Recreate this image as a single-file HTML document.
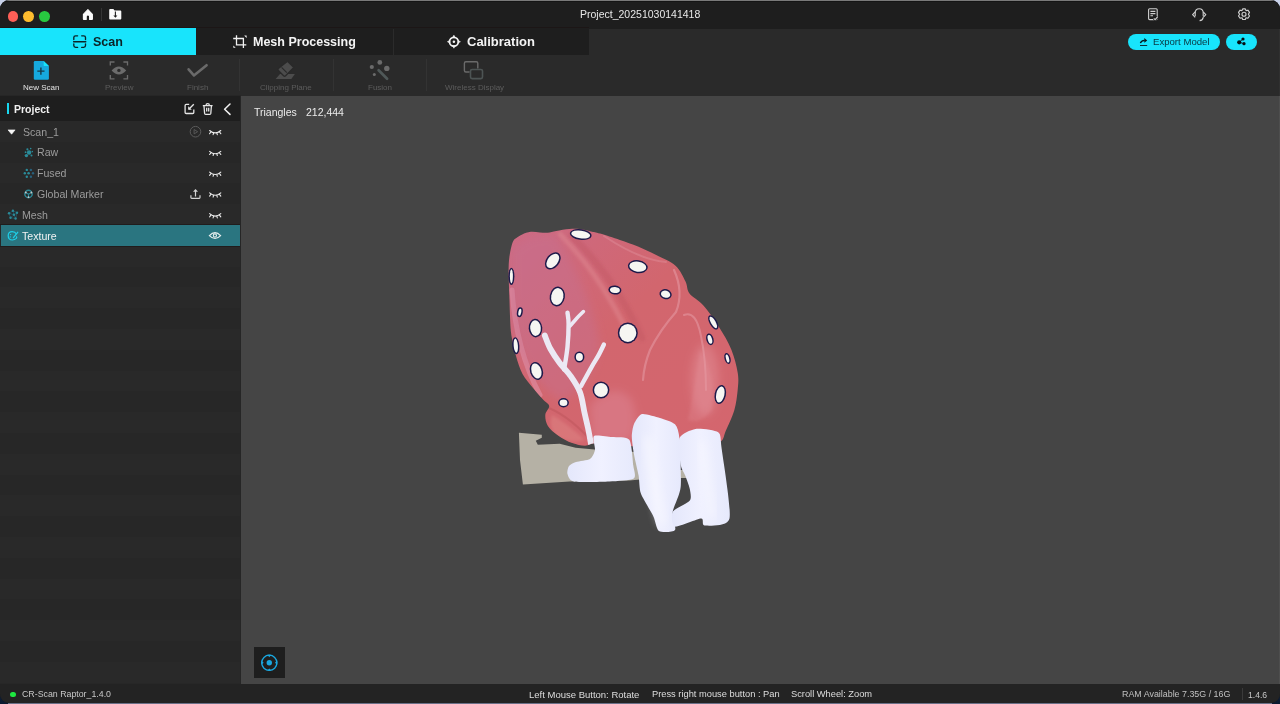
<!DOCTYPE html>
<html><head><meta charset="utf-8"><style>
*{box-sizing:border-box;margin:0;padding:0}
html,body{width:1280px;height:704px;overflow:hidden}
body{position:relative;background:linear-gradient(180deg,#c9d2ea 0%,#8a93a8 60%,#0c1a30 100%);font-family:"Liberation Sans",sans-serif}
.abs{position:absolute}
svg.abs{overflow:visible}
#win{position:absolute;left:0;top:0;width:1280px;height:703px;border-radius:9px;overflow:hidden;background:#1e1e1e}
.t{position:absolute;white-space:pre;line-height:1;will-change:transform}
</style></head><body>
<div id="win">
<div class="abs" style="left:0px;top:0px;width:1280px;height:28px;background:#1e1e1e;"></div><div class="abs" style="left:0px;top:27px;width:589px;height:1px;background:#1c1616;"></div><div class="abs" style="left:0px;top:28px;width:1280px;height:27px;background:#1e1e1e;"></div><div class="abs" style="left:0px;top:28px;width:196px;height:27px;background:#18e4fc;"></div><div class="abs" style="left:393px;top:29px;width:1px;height:26px;background:#2b2b2b;"></div><div class="abs" style="left:589px;top:29px;width:691px;height:26px;background:#2a2a2a;"></div><div class="abs" style="left:0px;top:55px;width:1280px;height:41px;background:#2a2a2a;"></div><div class="abs" style="left:0px;top:95px;width:241px;height:1px;background:#262626;"></div><div class="abs" style="left:0;top:96px;width:241px;height:588px;background:repeating-linear-gradient(180deg,#292929 0 20.8px,#272727 20.8px 41.6px);background-position:0 25px"></div><div class="abs" style="left:0px;top:96px;width:241px;height:25px;background:#1e1e1e;"></div><div class="abs" style="left:241px;top:96px;width:1039px;height:588px;background:#454545;"></div><div class="abs" style="left:1279px;top:29px;width:1px;height:67px;background:#303030;"></div><div class="abs" style="left:1279px;top:96px;width:1px;height:588px;background:#4e4e4e;"></div><div class="abs" style="left:0px;top:684px;width:1280px;height:19px;background:#232323;"></div><div class="abs" style="left:7px;top:0px;width:1266px;height:1px;background:#7a7a7a;"></div><div class="abs" style="left:5px;top:1px;width:1270px;height:1px;background:#151515;"></div><div class="abs" style="left:7.6px;top:11px;width:10.8px;height:10.8px;border-radius:50%;background:#fe5f57"></div><div class="abs" style="left:23.2px;top:11px;width:10.8px;height:10.8px;border-radius:50%;background:#febc2e"></div><div class="abs" style="left:38.9px;top:11px;width:10.8px;height:10.8px;border-radius:50%;background:#28c840"></div><div class="t" style="left:579.50px;top:9.01px;font-size:10.5px;font-weight:400;color:#e8e8e8;">Project_20251030141418</div><div class="t" style="left:93.00px;top:35.67px;font-size:12.5px;font-weight:700;color:#0b2327;">Scan</div><div class="t" style="left:253.00px;top:35.67px;font-size:12.5px;font-weight:700;color:#f4f4f4;">Mesh Processing</div><div class="t" style="left:467.00px;top:35.25px;font-size:13px;font-weight:700;color:#f4f4f4;">Calibration</div><div class="t" style="left:23.00px;top:84.13px;font-size:8px;font-weight:400;color:#e2e2e2;">New Scan</div><div class="t" style="left:105.00px;top:84.13px;font-size:8px;font-weight:400;color:#5c5c5c;">Preview</div><div class="t" style="left:187.00px;top:84.13px;font-size:8px;font-weight:400;color:#5c5c5c;">Finish</div><div class="t" style="left:260.00px;top:84.13px;font-size:8px;font-weight:400;color:#5c5c5c;">Clipping Plane</div><div class="t" style="left:368.00px;top:84.13px;font-size:8px;font-weight:400;color:#5c5c5c;">Fusion</div><div class="t" style="left:445.00px;top:84.13px;font-size:8px;font-weight:400;color:#5c5c5c;">Wireless Display</div><div class="abs" style="left:239px;top:59px;width:1px;height:32px;background:#333333;"></div><div class="abs" style="left:333px;top:59px;width:1px;height:32px;background:#333333;"></div><div class="abs" style="left:426px;top:59px;width:1px;height:32px;background:#333333;"></div><div class="abs" style="left:1128px;top:34px;width:92px;height:16px;border-radius:8px;background:#18e4fc"></div><div class="abs" style="left:1226px;top:34px;width:31px;height:16px;border-radius:8px;background:#18e4fc"></div><div class="t" style="left:1153.20px;top:36.67px;font-size:9.6px;font-weight:400;color:#0a3640;">Export Model</div><div class="abs" style="left:7px;top:103px;width:2px;height:11px;background:#18d8f0;"></div><div class="t" style="left:13.50px;top:103.81px;font-size:10.5px;font-weight:700;color:#f0f0f0;">Project</div><div class="abs" style="left:0px;top:224px;width:240px;height:1px;background:#201c1c;"></div><div class="abs" style="left:0px;top:246px;width:240px;height:1px;background:#201c1c;"></div><div class="abs" style="left:1px;top:225px;width:239px;height:21px;background:#2a7580;"></div><div class="abs" style="left:240px;top:96px;width:1px;height:588px;background:#262626;"></div><div class="t" style="left:23.00px;top:126.63px;font-size:10.6px;font-weight:400;color:#9c9c9c;">Scan_1</div><div class="t" style="left:37.00px;top:147.43px;font-size:10.6px;font-weight:400;color:#9c9c9c;">Raw</div><div class="t" style="left:37.00px;top:168.23px;font-size:10.6px;font-weight:400;color:#9c9c9c;">Fused</div><div class="t" style="left:37.00px;top:189.13px;font-size:10.6px;font-weight:400;color:#9c9c9c;">Global Marker</div><div class="t" style="left:21.50px;top:210.23px;font-size:10.6px;font-weight:400;color:#9c9c9c;">Mesh</div><div class="t" style="left:21.50px;top:230.73px;font-size:10.6px;font-weight:400;color:#f2f2f2;">Texture</div><div class="t" style="left:253.50px;top:106.71px;font-size:10.5px;font-weight:400;color:#ececec;">Triangles</div><div class="t" style="left:305.50px;top:106.71px;font-size:10.5px;font-weight:400;color:#ececec;">212,444</div><div class="abs" style="left:254px;top:647px;width:31px;height:31px;background:#1e1e1e;"></div><div class="abs" style="left:10.3px;top:691.6px;width:5.5px;height:5.5px;border-radius:50%;background:#1ee640"></div><div class="t" style="left:21.50px;top:689.85px;font-size:8.8px;font-weight:400;color:#c8c8c8;">CR-Scan Raptor_1.4.0</div><div class="t" style="left:528.50px;top:689.56px;font-size:9.5px;font-weight:400;color:#dedede;">Left Mouse Button: Rotate</div><div class="t" style="left:651.50px;top:689.73px;font-size:9.3px;font-weight:400;color:#dedede;">Press right mouse button : Pan</div><div class="t" style="left:791.00px;top:689.73px;font-size:9.3px;font-weight:400;color:#dedede;">Scroll Wheel: Zoom</div><div class="t" style="left:1122.00px;top:690.27px;font-size:8.9px;font-weight:400;color:#c0c0c0;">RAM Available 7.35G / 16G</div><div class="abs" style="left:1242px;top:688px;width:1px;height:12px;background:#3a3a3a;"></div><div class="t" style="left:1248.00px;top:690.52px;font-size:8.6px;font-weight:400;color:#c8c8c8;">1.4.6</div><svg class="abs" style="left:0;top:0" width="1280" height="704" viewBox="0 0 1280 704"><defs><linearGradient id="bodyg" x1="0" y1="0" x2="1" y2="1"><stop offset="0" stop-color="#cc6a84"/><stop offset="0.45" stop-color="#d2666e"/><stop offset="1" stop-color="#d4666e"/></linearGradient><linearGradient id="legg" x1="0" y1="0" x2="1" y2="0"><stop offset="0" stop-color="#e4e7fb"/><stop offset="0.5" stop-color="#f0f1ff"/><stop offset="1" stop-color="#e6e9fc"/></linearGradient><filter id="blr" x="-50%" y="-50%" width="200%" height="200%"><feGaussianBlur stdDeviation="4"/></filter><filter id="blr2" x="-50%" y="-50%" width="200%" height="200%"><feGaussianBlur stdDeviation="1.5"/></filter></defs><path d="M518.9,432.8 L541.8,434.8 L541.8,437.8 L535.8,440.8 L537.8,444.7 L559.7,443.7 L575.6,447.7 L600.0,450.0 L636.0,452.0 L640.0,479.5 L629.3,480.5 L569.6,481.5 L522.9,484.5 L520.0,460.0Z" fill="#b5b1a5"/><path d="M678.0,470.0 L690.0,470.0 L690.0,478.0 L678.0,478.0Z" fill="#b5b1a5"/><clipPath id="bodyclip"><path d="M508.6,270.0 C508.7,265.6 508.7,261.7 509.4,257.0 C510.1,252.3 511.5,245.2 512.8,242.0 C514.1,238.8 515.4,238.8 517.0,237.5 C518.6,236.2 519.9,235.3 522.2,234.4 C524.5,233.5 527.8,232.1 530.7,231.8 C533.6,231.5 536.9,232.2 539.8,232.4 C542.6,232.6 545.0,232.9 547.8,232.7 C550.5,232.5 552.7,231.6 556.3,231.0 C559.9,230.4 565.4,229.4 569.3,229.1 C573.2,228.8 575.9,228.7 579.5,229.1 C583.1,229.5 587.5,230.7 590.9,231.4 C594.3,232.1 595.2,232.1 600.0,233.5 C604.8,234.9 613.6,237.7 619.9,239.9 C626.2,242.1 632.0,244.0 638.0,246.5 C644.0,249.0 649.5,251.6 655.7,254.8 C662.0,258.0 670.5,261.2 675.5,265.7 C680.5,270.2 683.2,277.0 685.5,281.6 C687.8,286.2 686.5,289.6 689.5,293.6 C692.5,297.6 698.4,299.9 703.4,305.5 C708.4,311.1 714.7,320.1 719.3,327.4 C723.9,334.7 728.1,341.6 731.2,349.2 C734.3,356.8 736.6,365.9 737.7,372.7 C738.8,379.4 738.3,383.4 737.7,389.7 C737.1,395.9 736.3,403.4 734.3,410.2 C732.3,417.0 728.2,425.4 725.8,430.7 C723.4,436.0 724.3,439.4 720.0,442.0 C715.7,444.6 710.0,445.3 700.0,446.0 C690.0,446.7 673.3,446.0 660.0,446.0 C646.7,446.0 630.5,446.5 620.0,446.0 C609.5,445.5 602.8,443.1 597.0,443.0 C591.2,442.9 589.1,445.7 585.0,445.7 C580.9,445.7 576.7,444.8 572.2,443.1 C567.7,441.4 562.2,438.2 558.1,435.4 C554.0,432.5 550.0,429.4 547.9,426.0 C545.8,422.6 545.1,418.3 545.3,415.0 C545.5,411.7 549.5,408.5 549.2,406.0 C548.9,403.5 546.2,403.0 543.5,400.0 C540.8,397.0 536.5,392.3 533.0,388.0 C529.5,383.7 525.3,379.3 522.5,374.0 C519.7,368.7 517.8,362.3 516.0,356.0 C514.2,349.7 512.5,342.3 511.5,336.0 C510.5,329.7 510.4,324.4 510.1,318.4 C509.8,312.4 509.7,305.8 509.5,300.0 C509.3,294.2 509.0,288.6 508.9,283.6 C508.8,278.6 508.5,274.4 508.6,270.0Z"/></clipPath><path d="M508.6,270.0 C508.7,265.6 508.7,261.7 509.4,257.0 C510.1,252.3 511.5,245.2 512.8,242.0 C514.1,238.8 515.4,238.8 517.0,237.5 C518.6,236.2 519.9,235.3 522.2,234.4 C524.5,233.5 527.8,232.1 530.7,231.8 C533.6,231.5 536.9,232.2 539.8,232.4 C542.6,232.6 545.0,232.9 547.8,232.7 C550.5,232.5 552.7,231.6 556.3,231.0 C559.9,230.4 565.4,229.4 569.3,229.1 C573.2,228.8 575.9,228.7 579.5,229.1 C583.1,229.5 587.5,230.7 590.9,231.4 C594.3,232.1 595.2,232.1 600.0,233.5 C604.8,234.9 613.6,237.7 619.9,239.9 C626.2,242.1 632.0,244.0 638.0,246.5 C644.0,249.0 649.5,251.6 655.7,254.8 C662.0,258.0 670.5,261.2 675.5,265.7 C680.5,270.2 683.2,277.0 685.5,281.6 C687.8,286.2 686.5,289.6 689.5,293.6 C692.5,297.6 698.4,299.9 703.4,305.5 C708.4,311.1 714.7,320.1 719.3,327.4 C723.9,334.7 728.1,341.6 731.2,349.2 C734.3,356.8 736.6,365.9 737.7,372.7 C738.8,379.4 738.3,383.4 737.7,389.7 C737.1,395.9 736.3,403.4 734.3,410.2 C732.3,417.0 728.2,425.4 725.8,430.7 C723.4,436.0 724.3,439.4 720.0,442.0 C715.7,444.6 710.0,445.3 700.0,446.0 C690.0,446.7 673.3,446.0 660.0,446.0 C646.7,446.0 630.5,446.5 620.0,446.0 C609.5,445.5 602.8,443.1 597.0,443.0 C591.2,442.9 589.1,445.7 585.0,445.7 C580.9,445.7 576.7,444.8 572.2,443.1 C567.7,441.4 562.2,438.2 558.1,435.4 C554.0,432.5 550.0,429.4 547.9,426.0 C545.8,422.6 545.1,418.3 545.3,415.0 C545.5,411.7 549.5,408.5 549.2,406.0 C548.9,403.5 546.2,403.0 543.5,400.0 C540.8,397.0 536.5,392.3 533.0,388.0 C529.5,383.7 525.3,379.3 522.5,374.0 C519.7,368.7 517.8,362.3 516.0,356.0 C514.2,349.7 512.5,342.3 511.5,336.0 C510.5,329.7 510.4,324.4 510.1,318.4 C509.8,312.4 509.7,305.8 509.5,300.0 C509.3,294.2 509.0,288.6 508.9,283.6 C508.8,278.6 508.5,274.4 508.6,270.0Z" fill="url(#bodyg)"/><g clip-path="url(#bodyclip)"><g fill="none" stroke="#e59aa6" stroke-opacity="0.55" stroke-linecap="round"><path d="M674,270 Q684,292 676,312 Q660,330 650,350 Q644,365 643,380" stroke-width="2.2"/><path d="M684,315 Q696,310 701,336 Q706,360 706,390" stroke-width="2"/><path d="M604,236 Q640,260 666,262" stroke-width="2" stroke-opacity="0.35"/></g><path d="M700,350 Q716,372 712,410 Q700,425 688,420 Q694,390 700,350Z" fill="#e08a96" fill-opacity="0.3" filter="url(#blr2)"/><path d="M552,415 Q565,422 585,440 Q570,444 556,436 Q548,426 552,415Z" fill="#e08a88" fill-opacity="0.45" filter="url(#blr2)"/><path d="M512,290 Q516,350 540,395" fill="none" stroke="#e7a0b8" stroke-opacity="0.45" stroke-width="5" stroke-linecap="round"/><path d="M512,250 Q530,232 556,236 Q590,290 600,345 Q590,390 560,400 Q525,380 512,320Z" fill="#c67494" fill-opacity="0.4" filter="url(#blr)"/><path d="M560,234 Q590,265 610,300 Q622,320 630,338" fill="none" stroke="#e49098" stroke-opacity="0.4" stroke-width="5" stroke-linecap="round" filter="url(#blr2)"/><path d="M572,236 Q602,266 622,300 Q634,320 642,338" fill="none" stroke="#b84c58" stroke-opacity="0.3" stroke-width="7" stroke-linecap="round" filter="url(#blr2)"/><ellipse cx="705" cy="380" rx="14" ry="36" fill="#e8a0aa" fill-opacity="0.35" filter="url(#blr)"/><path d="M590,405 Q615,380 632,400 Q640,425 630,440 Q605,445 592,438Z" fill="#e39aae" fill-opacity="0.3" filter="url(#blr)"/><path d="M549,408 Q572,418 594,444" fill="none" stroke="#b04a50" stroke-opacity="0.3" stroke-width="2"/><path d="M591.0,444.0 C590.5,441.3 589.1,433.2 588.0,428.0 C586.9,422.8 585.8,418.6 584.5,412.7 C583.2,406.8 582.3,398.4 580.0,392.3 C577.7,386.2 574.3,381.3 570.9,376.4 C567.5,371.5 562.9,367.3 559.5,362.7 C556.1,358.1 553.0,353.5 550.5,349.0 C548.0,344.5 545.8,337.8 544.8,335.5" fill="none" stroke="#ece8f4" stroke-width="5.8" stroke-linecap="round" stroke-linejoin="round"/><path d="M564.1,369.5 C564.7,365.7 566.8,354.4 567.5,346.8 C568.2,339.2 568.6,329.7 568.6,324.0 C568.6,318.3 567.7,314.6 567.5,312.7" fill="none" stroke="#ece8f4" stroke-width="4.4" stroke-linecap="round" stroke-linejoin="round"/><path d="M570.0,326.0 C571.2,324.7 574.8,320.4 577.0,318.0 C579.2,315.6 582.3,312.7 583.4,311.6" fill="none" stroke="#ece8f4" stroke-width="3.6" stroke-linecap="round" stroke-linejoin="round"/><path d="M581.1,386.0 C582.8,382.9 588.5,372.3 591.4,367.3 C594.2,362.3 596.1,359.7 598.2,355.9 C600.3,352.1 603.0,346.4 603.9,344.5" fill="none" stroke="#ece8f4" stroke-width="4.4" stroke-linecap="round" stroke-linejoin="round"/></g><path d="M594.0,436.0 C596.0,434.5 607.9,436.6 612.0,437.0 C616.1,437.4 626.8,436.5 629.3,439.8 C631.8,443.1 632.8,461.1 633.3,465.6 C633.8,470.1 636.6,476.6 633.8,478.5 C631.0,480.4 616.4,481.1 609.4,481.5 C602.4,481.9 578.9,482.4 574.0,481.5 C569.1,480.6 568.1,475.8 567.5,474.0 C566.9,472.2 568.0,467.4 569.0,466.0 C570.0,464.6 573.5,462.8 576.0,462.0 C578.5,461.2 587.8,460.4 590.0,459.0 C592.2,457.6 594.5,452.7 595.0,450.0 C595.5,447.3 592.0,437.5 594.0,436.0Z" fill="url(#legg)"/><path d="M631.8,436.8 C631.8,433.2 632.8,426.7 634.0,424.0 C635.2,421.3 639.0,414.7 642.0,414.0 C645.0,413.3 656.1,416.8 660.0,418.0 C663.9,419.2 672.7,421.9 675.0,424.3 C677.3,426.8 678.8,431.7 679.5,439.0 C680.2,446.3 681.5,478.3 680.7,486.8 C679.9,495.3 673.4,506.8 672.7,511.8 C672.0,516.8 676.6,527.7 675.0,530.0 C673.4,532.3 661.5,532.7 659.0,531.1 C656.5,529.5 655.5,520.8 653.4,516.4 C651.3,512.0 642.6,498.4 640.9,493.6 C639.2,488.8 639.4,480.0 638.6,475.5 C637.8,471.0 634.9,459.5 634.1,455.0 C633.3,450.5 631.8,440.4 631.8,436.8Z" fill="url(#legg)"/><path d="M679.5,438.0 C681.2,433.8 691.0,429.6 695.5,428.9 C700.0,428.2 715.2,430.0 718.2,432.3 C721.2,434.6 720.3,438.1 721.6,448.2 C722.9,458.3 731.5,509.6 729.5,518.6 C727.5,527.6 707.8,525.5 704.5,525.5 C701.2,525.5 704.5,518.5 701.1,518.6 C697.7,518.7 678.3,527.4 675.0,526.6 C671.7,525.8 671.0,514.8 672.7,511.8 C674.4,508.8 687.8,503.2 689.8,500.5 C691.8,497.8 690.3,491.9 689.8,489.0 C689.3,486.1 686.3,478.3 685.2,475.5 C684.1,472.7 681.4,469.4 680.7,465.0 C680.0,460.6 677.8,442.2 679.5,438.0Z" fill="url(#legg)"/><path d="M648,440 Q652,480 662,520" fill="none" stroke="#f8f8ff" stroke-opacity="0.7" stroke-width="8" stroke-linecap="round" filter="url(#blr)"/><path d="M702,445 Q707,480 712,515" fill="none" stroke="#f8f8ff" stroke-opacity="0.6" stroke-width="8" stroke-linecap="round" filter="url(#blr)"/><g transform="translate(580.7,234.5) rotate(8)"><ellipse rx="11" ry="5.4" fill="#1c1a4a"/><ellipse rx="9.5" ry="3.9000000000000004" fill="#f6f6f2"/></g><g transform="translate(552.8,260.9) rotate(-52)"><ellipse rx="9.6" ry="6.6" fill="#1c1a4a"/><ellipse rx="8.1" ry="5.1" fill="#f6f6f2"/></g><g transform="translate(511.4,276.3) rotate(0)"><ellipse rx="3" ry="8.6" fill="#1c1a4a"/><ellipse rx="1.5" ry="7.1" fill="#f6f6f2"/></g><g transform="translate(557.3,296.5) rotate(10)"><ellipse rx="7.6" ry="10" fill="#1c1a4a"/><ellipse rx="6.1" ry="8.5" fill="#f6f6f2"/></g><g transform="translate(637.8,266.7) rotate(8)"><ellipse rx="10" ry="6.5" fill="#1c1a4a"/><ellipse rx="8.5" ry="5.0" fill="#f6f6f2"/></g><g transform="translate(614.9,290) rotate(5)"><ellipse rx="6.5" ry="4.6" fill="#1c1a4a"/><ellipse rx="5.0" ry="3.0999999999999996" fill="#f6f6f2"/></g><g transform="translate(665.6,294.2) rotate(15)"><ellipse rx="6.2" ry="5" fill="#1c1a4a"/><ellipse rx="4.7" ry="3.5" fill="#f6f6f2"/></g><g transform="translate(519.8,312.2) rotate(10)"><ellipse rx="2.9" ry="5" fill="#1c1a4a"/><ellipse rx="1.4" ry="3.5" fill="#f6f6f2"/></g><g transform="translate(535.5,328.1) rotate(-5)"><ellipse rx="6.8" ry="9.3" fill="#1c1a4a"/><ellipse rx="5.3" ry="7.800000000000001" fill="#f6f6f2"/></g><g transform="translate(627.8,332.9) rotate(0)"><ellipse rx="10" ry="10.5" fill="#1c1a4a"/><ellipse rx="8.5" ry="9.0" fill="#f6f6f2"/></g><g transform="translate(515.8,345.7) rotate(-5)"><ellipse rx="3.6" ry="8.6" fill="#1c1a4a"/><ellipse rx="2.1" ry="7.1" fill="#f6f6f2"/></g><g transform="translate(579.4,357) rotate(0)"><ellipse rx="5" ry="5.5" fill="#1c1a4a"/><ellipse rx="3.5" ry="4.0" fill="#f6f6f2"/></g><g transform="translate(536.4,370.9) rotate(-18)"><ellipse rx="6.4" ry="9.2" fill="#1c1a4a"/><ellipse rx="4.9" ry="7.699999999999999" fill="#f6f6f2"/></g><g transform="translate(601,390) rotate(0)"><ellipse rx="8.4" ry="8.6" fill="#1c1a4a"/><ellipse rx="6.9" ry="7.1" fill="#f6f6f2"/></g><g transform="translate(563.5,402.8) rotate(0)"><ellipse rx="5.4" ry="4.7" fill="#1c1a4a"/><ellipse rx="3.9000000000000004" ry="3.2" fill="#f6f6f2"/></g><g transform="translate(713.3,322.4) rotate(-30)"><ellipse rx="3.8" ry="8" fill="#1c1a4a"/><ellipse rx="2.3" ry="6.5" fill="#f6f6f2"/></g><g transform="translate(709.9,339.3) rotate(-15)"><ellipse rx="3.6" ry="6" fill="#1c1a4a"/><ellipse rx="2.1" ry="4.5" fill="#f6f6f2"/></g><g transform="translate(727.5,358.5) rotate(-15)"><ellipse rx="3" ry="5.6" fill="#1c1a4a"/><ellipse rx="1.5" ry="4.1" fill="#f6f6f2"/></g><g transform="translate(720.3,394.5) rotate(12)"><ellipse rx="5.6" ry="9.6" fill="#1c1a4a"/><ellipse rx="4.1" ry="8.1" fill="#f6f6f2"/></g></svg><svg class="abs" style="left:0;top:0" width="1280" height="704" viewBox="0 0 1280 704"><path d="M83.4,14.4 L87.9,9.7 L92.4,14.4 V19 Q92.4,19.5 91.9,19.5 H89.6 V16.6 Q89.6,15 87.9,15 Q86.2,15 86.2,16.6 V19.5 H83.9 Q83.4,19.5 83.4,19 Z" fill="#fafafa" stroke="#fafafa" stroke-width="1.1" stroke-linejoin="round"/><rect x="101" y="8" width="1" height="13" fill="#353535"/><path d="M109.2,10 Q109.2,9.1 110.1,9.1 H113.4 L114.6,10.6 H120.4 Q121.3,10.6 121.3,11.5 V18.5 Q121.3,19.4 120.4,19.4 H110.1 Q109.2,19.4 109.2,18.5 Z" fill="#fafafa"/><path d="M115.4,11.5 V16.6" stroke="#1e1e1e" stroke-width="1.1"/><path d="M113.4,15.6 L115.4,17.8 L117.4,15.6 Z" fill="#1e1e1e"/><g fill="none" stroke="#cfcfcf" stroke-width="1.1"><path d="M156.6,0"/><rect x="1148.6" y="8.8" width="8.6" height="10.8" rx="1"/></g><g stroke="#cfcfcf" stroke-width="1.1"><path d="M1150.4,11.4 H1155.4 M1150.4,13.6 H1155.4 M1150.4,15.8 H1153"/></g><path d="M1153.8,18.4 L1155.1,19.6 L1157.8,16.6" fill="none" stroke="#1e1e1e" stroke-width="2.6"/><path d="M1153.8,18.4 L1155.1,19.6 L1157.8,16.6" fill="none" stroke="#cfcfcf" stroke-width="1.1"/><g fill="none" stroke="#cfcfcf" stroke-width="1.15" stroke-linejoin="round"><path d="M1195.2,16.2 V12.8 Q1195.2,8.7 1199.2,8.7 Q1203.2,8.7 1203.2,12.8 V16.2"/><path d="M1195.2,11.9 L1192.6,14.6 L1195.2,17.3"/><path d="M1203.2,11.9 L1205.8,14.6 L1203.2,17.3"/><path d="M1203.2,17.3 Q1202.8,20.3 1199.6,20.6"/></g><g fill="none" stroke="#cfcfcf" stroke-width="1.15"><path d="M1242.7,8.9 H1245.3 L1246,10.6 L1247.9,10.2 L1249.5,12.4 L1248.4,14.2 L1249.5,16 L1247.9,18.2 L1246,17.8 L1245.3,19.5 H1242.7 L1242,17.8 L1240.1,18.2 L1238.5,16 L1239.6,14.2 L1238.5,12.4 L1240.1,10.2 L1242,10.6 Z" stroke-linejoin="round"/><circle cx="1244" cy="14.2" r="2"/></g><g fill="none" stroke="#0b2327" stroke-width="1.35" stroke-linecap="round"><path d="M73.8,39.6 V37.6 Q73.8,35.8 75.6,35.8 H77.6"/><path d="M81.7,35.8 H83.7 Q85.5,35.8 85.5,37.6 V39.6"/><path d="M73.8,43.8 V45.6 Q73.8,47.4 75.6,47.4 H77.6"/><path d="M81.7,47.4 H83.7 Q85.5,47.4 85.5,45.6 V43.8"/><path d="M73.6,41.7 H85.8"/></g><g fill="none" stroke="#f2f2f2" stroke-width="1.3"><path d="M236.5,35.2 V44.8 H246.3"/><path d="M233.2,38.5 H243.4 V48"/></g><path d="M244.2,35.6 L246.6,35.6 L246.6,38 Z" fill="#f2f2f2"/><path d="M233.3,45.4 L233.3,47.8 L235.7,47.8 Z" fill="#f2f2f2"/><circle cx="453.9" cy="41.7" r="4.4" fill="none" stroke="#f4f4f4" stroke-width="1.7"/><circle cx="453.9" cy="41.7" r="1.25" fill="#f4f4f4"/><path d="M452.6,37.6 L453.9,35.2 L455.2,37.6 Z M452.6,45.8 L453.9,48.2 L455.2,45.8 Z M449.8,40.4 L447.4,41.7 L449.8,43 Z M458,40.4 L460.4,41.7 L458,43 Z" fill="#f4f4f4" stroke="#f4f4f4" stroke-width="0.6" stroke-linejoin="round"/><path d="M35,61 H43.7 L48.9,66 V78.6 Q48.9,79.8 47.7,79.8 H35 Q33.8,79.8 33.8,78.6 V62.2 Q33.8,61 35,61 Z" fill="#16a9de"/><path d="M43.7,61 L48.9,66 H44.2 Q43.7,66 43.7,65.5 Z" fill="#18e4fb"/><path d="M37.3,71.1 H44.5 M40.9,67.5 V74.7" stroke="#173a48" stroke-width="1.4"/><g fill="none" stroke="#6b6b6b" stroke-width="1.35"><path d="M110.3,65.6 V62 H114.5 M123.4,62 H127.5 V65.6 M110.3,75 V78.9 H114.5 M123.4,78.9 H127.5 V75"/></g><path d="M111.6,70.4 Q118.9,62.4 126.2,70.4 Q118.9,78.4 111.6,70.4 Z" fill="#6b6b6b"/><circle cx="118.9" cy="70.4" r="1.7" fill="#2a2a2a"/><path d="M188.6,69.3 L193.9,75.4 L206.6,65.2" fill="none" stroke="#6a6a6a" stroke-width="2.6" stroke-linecap="round" stroke-linejoin="round"/><path d="M275.6,78.9 L280,73.9 H294.9 L291.3,78.9 Z" fill="#4c4c4c"/><path d="M287.5,61.2 L293.8,67.5 L285.6,75.7 Q284.6,76.7 283.6,75.7 L278.4,70.5 Q277.4,69.5 278.4,68.5 Z" fill="#4c4c4c" stroke="#2a2a2a" stroke-width="1.3"/><path d="M281.6,67.4 L286.8,72.6" stroke="#2a2a2a" stroke-width="1.2"/><g fill="#6b6b6b"><circle cx="379.8" cy="62.4" r="2.4"/><circle cx="371.8" cy="67" r="2.1"/><circle cx="386.8" cy="68.4" r="2.7"/><circle cx="374.3" cy="74.4" r="1.5"/></g><path d="M378.6,70.2 L387.1,78.8" stroke="#4f5858" stroke-width="2.7" stroke-linecap="round"/><path d="M469.6,72 H465.9 Q464.4,72 464.4,70.5 V63.3 Q464.4,61.8 465.9,61.8 H476.3 Q477.8,61.8 477.8,63.3 V68.6" fill="none" stroke="#6a6a6a" stroke-width="1.4"/><rect x="470.5" y="69.5" width="12" height="9.1" rx="1.6" fill="none" stroke="#4d5454" stroke-width="1.6"/><path d="M1140.4,43.2 Q1141,40.6 1144.6,40.4" fill="none" stroke="#071418" stroke-width="1.3"/><path d="M1144.3,38 L1147.2,40.4 L1144.3,42.8 Z" fill="#071418"/><path d="M1140,45.5 H1147.2" stroke="#0d3038" stroke-width="1"/><g fill="#050d10"><circle cx="1243" cy="39" r="1.6"/><circle cx="1239.2" cy="42.3" r="2.1"/><circle cx="1244" cy="43.7" r="1.6"/></g><path d="M1243,39 L1239.2,42.3 L1244,43.7" fill="none" stroke="#050d10" stroke-width="0.8"/><g fill="none" stroke="#e6e6e6" stroke-width="1.3" stroke-linejoin="round"><path d="M189.2,104.4 H186.2 Q185.1,104.4 185.1,105.5 V112.4 Q185.1,113.5 186.2,113.5 H192.7 Q193.8,113.5 193.8,112.4 V109.6"/><path d="M193.8,104.2 L188.8,109.2"/></g><path d="M188.2,106.2 V109.8 H191.8 Z" fill="#e6e6e6"/><g fill="none" stroke="#e6e6e6" stroke-width="1.3" stroke-linejoin="round"><path d="M202.8,105.6 H212.6"/><path d="M206,105.4 Q206,103.6 207.7,103.6 Q209.4,103.6 209.4,105.4"/><path d="M204,106 L204.6,113.4 Q204.7,114.3 205.6,114.3 H209.8 Q210.7,114.3 210.8,113.4 L211.4,106"/><path d="M206.7,107.8 V111.6 M208.7,107.8 V111.6"/></g><path d="M230,104 L224.6,109.2 L230,114.4" fill="none" stroke="#f0f0f0" stroke-width="1.5" stroke-linecap="round" stroke-linejoin="round"/><path d="M8,129.9 H15.1 L11.6,134.2 Z" fill="#f6f6f6" stroke="#f6f6f6" stroke-width="0.6" stroke-linejoin="round"/><g fill="#2a8b99"><circle cx="29.1" cy="152.5" r="2.2"/><circle cx="26.4" cy="155.6" r="1.7"/><circle cx="27.4" cy="149.3" r="1.1"/><circle cx="30.7" cy="148.6" r="0.8"/><circle cx="31.5" cy="155.4" r="1"/><circle cx="25.6" cy="152.2" r="0.9"/><circle cx="32.3" cy="151.6" r="0.8"/></g><g fill="#2a8b99"><circle cx="26.8" cy="169.9" r="1.2"/><circle cx="24.8" cy="173.3" r="1.2"/><circle cx="28.6" cy="173.3" r="1.3"/><circle cx="26.8" cy="176.7" r="1.2"/></g><g fill="#28607c"><circle cx="30.9" cy="169.9" r="1.2"/><circle cx="33" cy="173.3" r="1.2"/><circle cx="30.9" cy="176.7" r="1.2"/></g><circle cx="28.5" cy="194" r="3.7" fill="none" stroke="#2a8b99" stroke-width="1.4"/><path d="M28.5,194.3 L25.8,192.5 M28.5,194.3 L31.4,192.5 M28.5,194.3 V197.2" stroke="#2a8b99" stroke-width="1.1"/><g fill="#c8c8c8"><circle cx="25.8" cy="192.5" r="0.9"/><circle cx="31.4" cy="192.5" r="0.9"/><circle cx="28.5" cy="197.2" r="0.9"/></g><path d="M12.9,210.8 L17,212.7 L15.6,218.5 L10.5,217.7 L9,213.3 Z M12.9,210.8 L14,214.8 L15.6,218.5 M9,213.3 L14,214.8 L17,212.7 M10.5,217.7 L14,214.8" fill="none" stroke="#245868" stroke-width="0.8"/><g fill="#2a8b99"><circle cx="12.9" cy="210.8" r="1.2"/><circle cx="17" cy="212.7" r="1.2"/><circle cx="15.6" cy="218.5" r="1.2"/><circle cx="10.5" cy="217.7" r="1.2"/><circle cx="9" cy="213.3" r="1.2"/><circle cx="14" cy="214.8" r="1.2"/></g><path d="M16.4,234 Q15.2,231.6 12.2,231.6 Q8.2,231.6 8.2,235.8 Q8.2,240 12.4,240 Q14.6,240 16.3,238.4 Q17.2,237.2 16.2,236.6" fill="none" stroke="#1ecfe8" stroke-width="1.2"/><circle cx="10.6" cy="234.6" r="0.7" fill="#1ecfe8"/><circle cx="10.3" cy="236.9" r="0.7" fill="#1ecfe8"/><path d="M17.7,232.3 L13.4,237.6" stroke="#1ecfe8" stroke-width="1.3" stroke-linecap="round"/><g fill="none" stroke="#ececec" stroke-width="1.1" stroke-linecap="round"><path d="M209.6,130.5 Q215.2,135.29999999999998 220.8,130.5"/><path d="M210.9,132.0 L209.6,133.7 M213.6,133.1 L213.1,134.7 M216.8,133.1 L217.3,134.7 M219.5,132.0 L220.8,133.7"/></g><g fill="none" stroke="#ececec" stroke-width="1.1" stroke-linecap="round"><path d="M209.6,151.3 Q215.2,156.1 220.8,151.3"/><path d="M210.9,152.8 L209.6,154.5 M213.6,153.9 L213.1,155.5 M216.8,153.9 L217.3,155.5 M219.5,152.8 L220.8,154.5"/></g><g fill="none" stroke="#ececec" stroke-width="1.1" stroke-linecap="round"><path d="M209.6,172.10000000000002 Q215.2,176.9 220.8,172.10000000000002"/><path d="M210.9,173.60000000000002 L209.6,175.3 M213.6,174.70000000000002 L213.1,176.3 M216.8,174.70000000000002 L217.3,176.3 M219.5,173.60000000000002 L220.8,175.3"/></g><g fill="none" stroke="#ececec" stroke-width="1.1" stroke-linecap="round"><path d="M209.6,192.9 Q215.2,197.7 220.8,192.9"/><path d="M210.9,194.4 L209.6,196.1 M213.6,195.5 L213.1,197.1 M216.8,195.5 L217.3,197.1 M219.5,194.4 L220.8,196.1"/></g><g fill="none" stroke="#ececec" stroke-width="1.1" stroke-linecap="round"><path d="M209.6,213.70000000000002 Q215.2,218.5 220.8,213.70000000000002"/><path d="M210.9,215.20000000000002 L209.6,216.9 M213.6,216.3 L213.1,217.9 M216.8,216.3 L217.3,217.9 M219.5,215.20000000000002 L220.8,216.9"/></g><circle cx="195.5" cy="131.7" r="5.3" fill="none" stroke="#5c5c5c" stroke-width="1"/><path d="M194.1,129.5 L197.6,131.7 L194.1,133.9 Z" fill="none" stroke="#5c5c5c" stroke-width="0.9" stroke-linejoin="round"/><g fill="none" stroke="#d2d2d2" stroke-width="1.2"><path d="M190.9,195.2 V197.6 Q190.9,198.4 191.7,198.4 H199.2 Q200,198.4 200,197.6 V195.2"/><path d="M195.5,190.2 V196.4"/></g><path d="M195.5,189 L193,191.8 H198 Z" fill="#d2d2d2"/><path d="M209.4,235.6 Q215,229.8 220.6,235.6 Q215,241.4 209.4,235.6 Z" fill="none" stroke="#e4ecec" stroke-width="1.2"/><circle cx="214.9" cy="235.5" r="1.6" fill="none" stroke="#e4ecec" stroke-width="1.1"/><circle cx="269.3" cy="662.8" r="7.6" fill="none" stroke="#1aa8e0" stroke-width="1.3"/><circle cx="269.3" cy="662.8" r="2.7" fill="#1aa8e0"/><path d="M269.3,657.2 L267.3,654.8 H271.3 Z M269.3,668.4 L267.3,670.8 H271.3 Z M263.7,662.8 L261.3,660.8 V664.8 Z M274.9,662.8 L277.3,660.8 V664.8 Z" fill="#1aa8e0"/></svg>
</div>
<div style="position:absolute;left:8px;top:703px;width:1264px;height:1px;background:#6a7088"></div>
</body></html>
